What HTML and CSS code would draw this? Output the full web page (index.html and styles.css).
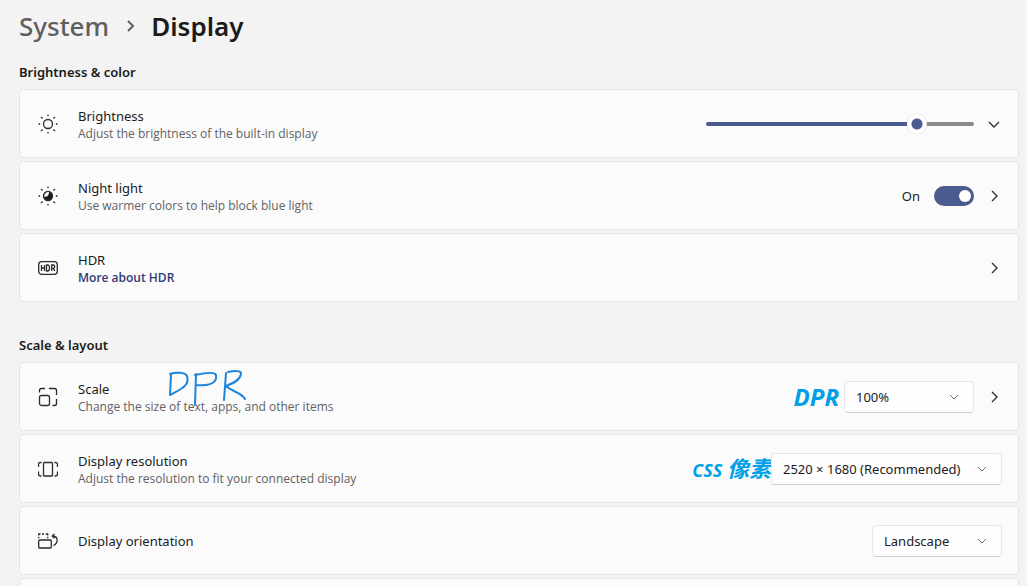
FILE: index.html
```html
<!DOCTYPE html>
<html lang="en">
<head>
<meta charset="utf-8">
<title>Display settings</title>
<link rel="stylesheet" href="styles.css">
</head>
<body>
<main class="page">
  <h1 class="crumbs">
    <a class="crumb-parent" href="#system">System</a>
    <svg class="crumb-sep" viewBox="0 0 10 14" aria-hidden="true"><path d="M3 2l5 5-5 5"/></svg>
    <span>Display</span>
  </h1>

  <section class="group">
    <h2 class="group-title">Brightness &amp; color</h2>
    <div class="card">
      <svg class="icon" viewBox="0 0 20 20" aria-hidden="true"><circle cx="10" cy="10" r="4.5"/><path d="M10 .5v1.6M10 17.9v1.6M.5 10h1.6M17.9 10h1.6M3 3l1.5 1.5M15.5 15.500l1.500 1.500M3 17l1.500-1.500M15.500 4.500L17 3"/></svg>
      <div class="info">
        <label class="name" for="brightness">Brightness</label>
        <span class="desc">Adjust the brightness of the built-in display</span>
      </div>
      <input class="slider" id="brightness" type="range" min="0" max="100" value="81">
      <button class="more" aria-label="Expand brightness"><svg viewBox="0 0 16 16"><path d="M3 6l5 5 5-5"/></svg></button>
    </div>
    <div class="card">
      <svg class="icon" viewBox="0 0 20 20" aria-hidden="true"><circle class="solid" cx="10" cy="10" r="4.500"/><path class="moon" d="M6.300 10.800A4 4 0 0 1 11 6.200 4.200 4.200 0 0 1 6.300 10.800z"/><path d="M10 .5v1.600M10 17.900v1.600M.5 10h1.600M17.900 10h1.600M3 3l1.500 1.500M15.500 15.500l1.500 1.500M3 17l1.500-1.500M15.500 4.500L17 3"/></svg>
      <div class="info">
        <span class="name" id="night-name">Night light</span>
        <span class="desc">Use warmer colors to help block blue light</span>
      </div>
      <label class="switch-label" for="night">On</label>
      <input class="switch" id="night" type="checkbox" role="switch" aria-describedby="night-name" checked>
      <button class="more" aria-label="Open night light"><svg viewBox="0 0 16 16"><path d="M6 3l5 5-5 5"/></svg></button>
    </div>
    <div class="card">
      <svg class="icon" viewBox="0 0 20 20" aria-hidden="true"><rect x=".7" y="3.700" width="18.600" height="12.600" rx="3"/><path d="M3.500 7v6M6.500 7v6M3.500 10h3M8.500 7v6h1q2 0 2-3t-2-3zM13.700 13V7h1.300q1.700 0 1.700 1.700t-1.700 1.700h-1.300M15.300 10.400l1.500 2.600"/></svg>
      <div class="info">
        <span class="name">HDR</span>
        <a class="link" href="#hdr">More about HDR</a>
      </div>
      <button class="more" aria-label="Open HDR"><svg viewBox="0 0 16 16"><path d="M6 3l5 5-5 5"/></svg></button>
    </div>
  </section>

  <section class="group">
    <h2 class="group-title">Scale &amp; layout</h2>
    <div class="card">
      <svg class="icon" viewBox="0 0 20 20" aria-hidden="true"><rect x="1.500" y="8.500" width="10" height="10" rx="2"/><path d="M1.500 5.500V3.500q0-2 2-2H7M11 1.500h5.500q2 0 2 2V8M18.500 12v4.500q0 2-2 2H14.500"/></svg>
      <div class="info">
        <label class="name" for="scale">Scale</label>
        <span class="desc">Change the size of text, apps, and other items</span>
        <svg class="ink" viewBox="0 0 80 38" role="img" aria-label="Handwritten DPR"><path d="M4 6L3 26M3 5C8 3 18 3 20 7C23 17 14 20 3 26M29 5L28 36M28 6C37 4 48 2 49 6C51 16 38 17 29 16M59 4L57 31M61 3C66 2 75 1 74 5C73 11 67 14 59 17C67 24 74 23 78 30"/></svg>
      </div>
      <span class="note note-latin">DPR</span>
      <div class="dropdown">
        <select id="scale"><option>100%</option></select>
        <svg viewBox="0 0 12 12" aria-hidden="true"><path d="M2 4l4 4 4-4"/></svg>
      </div>
      <button class="more" aria-label="Open scale"><svg viewBox="0 0 16 16"><path d="M6 3l5 5-5 5"/></svg></button>
    </div>
    <div class="card">
      <svg class="icon" viewBox="0 0 20 20" aria-hidden="true"><rect x="5.500" y="3.500" width="9" height="13.500" rx="1"/><path d="M3.500 3.500H2.500q-2 0-2 2V8M.5 12.500v2.500q0 2 2 2h1M16.500 3.500h1q2 0 2 2V8M19.500 12.500v2.500q0 2-2 2h-1"/></svg>
      <div class="info">
        <label class="name" for="resolution">Display resolution</label>
        <span class="desc">Adjust the resolution to fit your connected display</span>
      </div>
      <span class="note">CSS <span class="note-cjk" lang="zh">像素</span></span>
      <div class="dropdown dropdown-wide">
        <select id="resolution"><option>2520 × 1680 (Recommended)</option></select>
        <svg viewBox="0 0 12 12" aria-hidden="true"><path d="M2 4l4 4 4-4"/></svg>
      </div>
    </div>
    <div class="card">
      <svg class="icon" viewBox="0 0 20 20" aria-hidden="true"><rect x=".7" y="9" width="12.600" height="8" rx="1"/><path d="M.7 7.200V5.800M.7 4.500V3H2.500M4 3h2M7.800 3h1.900V4.500M9.700 5.800v1.400M16.500 3L14.300 5l2.200 2.300M14.800 5c5.700.3 5.700 7 .7 9.500"/></svg>
      <div class="info info-single">
        <label class="name" for="orientation">Display orientation</label>
      </div>
      <div class="dropdown">
        <select id="orientation"><option>Landscape</option></select>
        <svg viewBox="0 0 12 12" aria-hidden="true"><path d="M2 4l4 4 4-4"/></svg>
      </div>
    </div>
    <div class="card"></div>
  </section>
</main>
</body>
</html>
```
FILE: styles.css
```css
* { box-sizing: border-box; }

body {
  margin: 0;
  background: #f3f3f3;
  color: #1b1b1b;
  font: 14px/18px "Noto Sans", "Noto Sans CJK SC", sans-serif;
}

svg {
  fill: none;
  stroke: #2b2b2b;
}

.page {
  height: 100vh;
  overflow: hidden;
  padding: 8px 8px 0 19px;
}

.crumbs {
  display: flex;
  align-items: center;
  gap: 16px;
  margin: 0 0 18px;
  font-size: 26px;
  line-height: 36px;
  font-weight: 600;
}

.crumb-parent {
  color: #5f5f5f;
  font-weight: 500;
  text-decoration: none;
}

.crumb-sep {
  width: 10px;
  height: 14px;
  stroke: #5f5f5f;
  stroke-width: 2;
}

.group {
  display: flex;
  flex-direction: column;
  gap: 3px;
  margin-bottom: 33px;
}

.group-title {
  margin: 0 0 4px;
  font-size: 13px;
  line-height: 20px;
  font-weight: 600;
}

.card {
  display: flex;
  flex-shrink: 0;
  align-items: center;
  min-height: 69px;
  padding: 0 16px 0 18px;
  border: 1px solid #e5e5e5;
  border-radius: 4px;
  background: #fbfbfb;
}

.icon {
  width: 20px;
  height: 20px;
  margin-right: 20px;
  stroke-width: 1.3;
}

.solid { fill: #1b1b1b; }

.moon {
  fill: #fbfbfb;
  stroke: none;
}

.info {
  position: relative;
  display: flex;
  flex: 1;
  flex-direction: column;
  align-items: flex-start;
  padding-top: 3px;
}

.info-single { padding-top: 0; }

.name { font-size: 13px; }

.desc {
  color: #626262;
  font-family: "Open Sans", sans-serif;
  font-size: 12px;
}

.link {
  color: #2f3a74;
  font-family: "Open Sans", sans-serif;
  font-size: 12px;
  font-weight: 600;
  text-decoration: none;
}

.ink {
  position: absolute;
  top: -8px;
  left: 89px;
  width: 80px;
  height: 38px;
  stroke: #1c84dc;
  stroke-width: 2;
  stroke-linecap: round;
  stroke-linejoin: round;
}

.more {
  width: 16px;
  height: 16px;
  margin-left: 12px;
  padding: 0;
  border: 0;
  background: none;
}

.more svg {
  display: block;
  stroke-width: 1.3;
}

.slider {
  width: 268px;
  height: 20px;
  margin: 0;
  appearance: none;
  background: none;
}

.slider::-webkit-slider-runnable-track {
  height: 4px;
  border-radius: 2px;
  background: linear-gradient(to right, #4a5b8f 80%, #8a8a8a 80%);
}

.slider::-webkit-slider-thumb {
  width: 20px;
  height: 20px;
  margin-top: -8px;
  appearance: none;
  border-radius: 50%;
  background: radial-gradient(circle, #4a5b8f 5px, #fff 6px);
  box-shadow: 0 0 1px #999;
}

.switch-label {
  margin-right: 14px;
  font-size: 13px;
}

.switch {
  width: 40px;
  height: 20px;
  margin: 0;
  padding: 4px 3px;
  appearance: none;
  border-radius: 10px;
  background: #4a5b8f;
}

.switch::before {
  content: "";
  display: block;
  width: 12px;
  height: 12px;
  margin-left: auto;
  border-radius: 50%;
  background: #fff;
}

.dropdown {
  position: relative;
  width: 130px;
}

.dropdown-wide { width: 231px; }

.dropdown select {
  display: block;
  width: 100%;
  height: 32px;
  padding: 0 11px;
  appearance: none;
  border: 1px solid #e8e8e8;
  border-bottom-color: #cfcfcf;
  border-radius: 4px;
  background: #fefefe;
  color: inherit;
  font: inherit;
  font-size: 13px;
}

.dropdown svg {
  position: absolute;
  top: 10px;
  right: 14px;
  width: 12px;
  height: 12px;
  stroke: #6a6a6a;
  pointer-events: none;
}

.note {
  color: #009fe8;
  font-family: "Open Sans", "Noto Sans CJK SC", sans-serif;
  font-size: 18px;
  line-height: 24px;
  font-style: italic;
  font-weight: 700;
}

.note-latin {
  margin-right: 5px;
  font-size: 24px;
}

.note-cjk { font-size: 22px; }
```
